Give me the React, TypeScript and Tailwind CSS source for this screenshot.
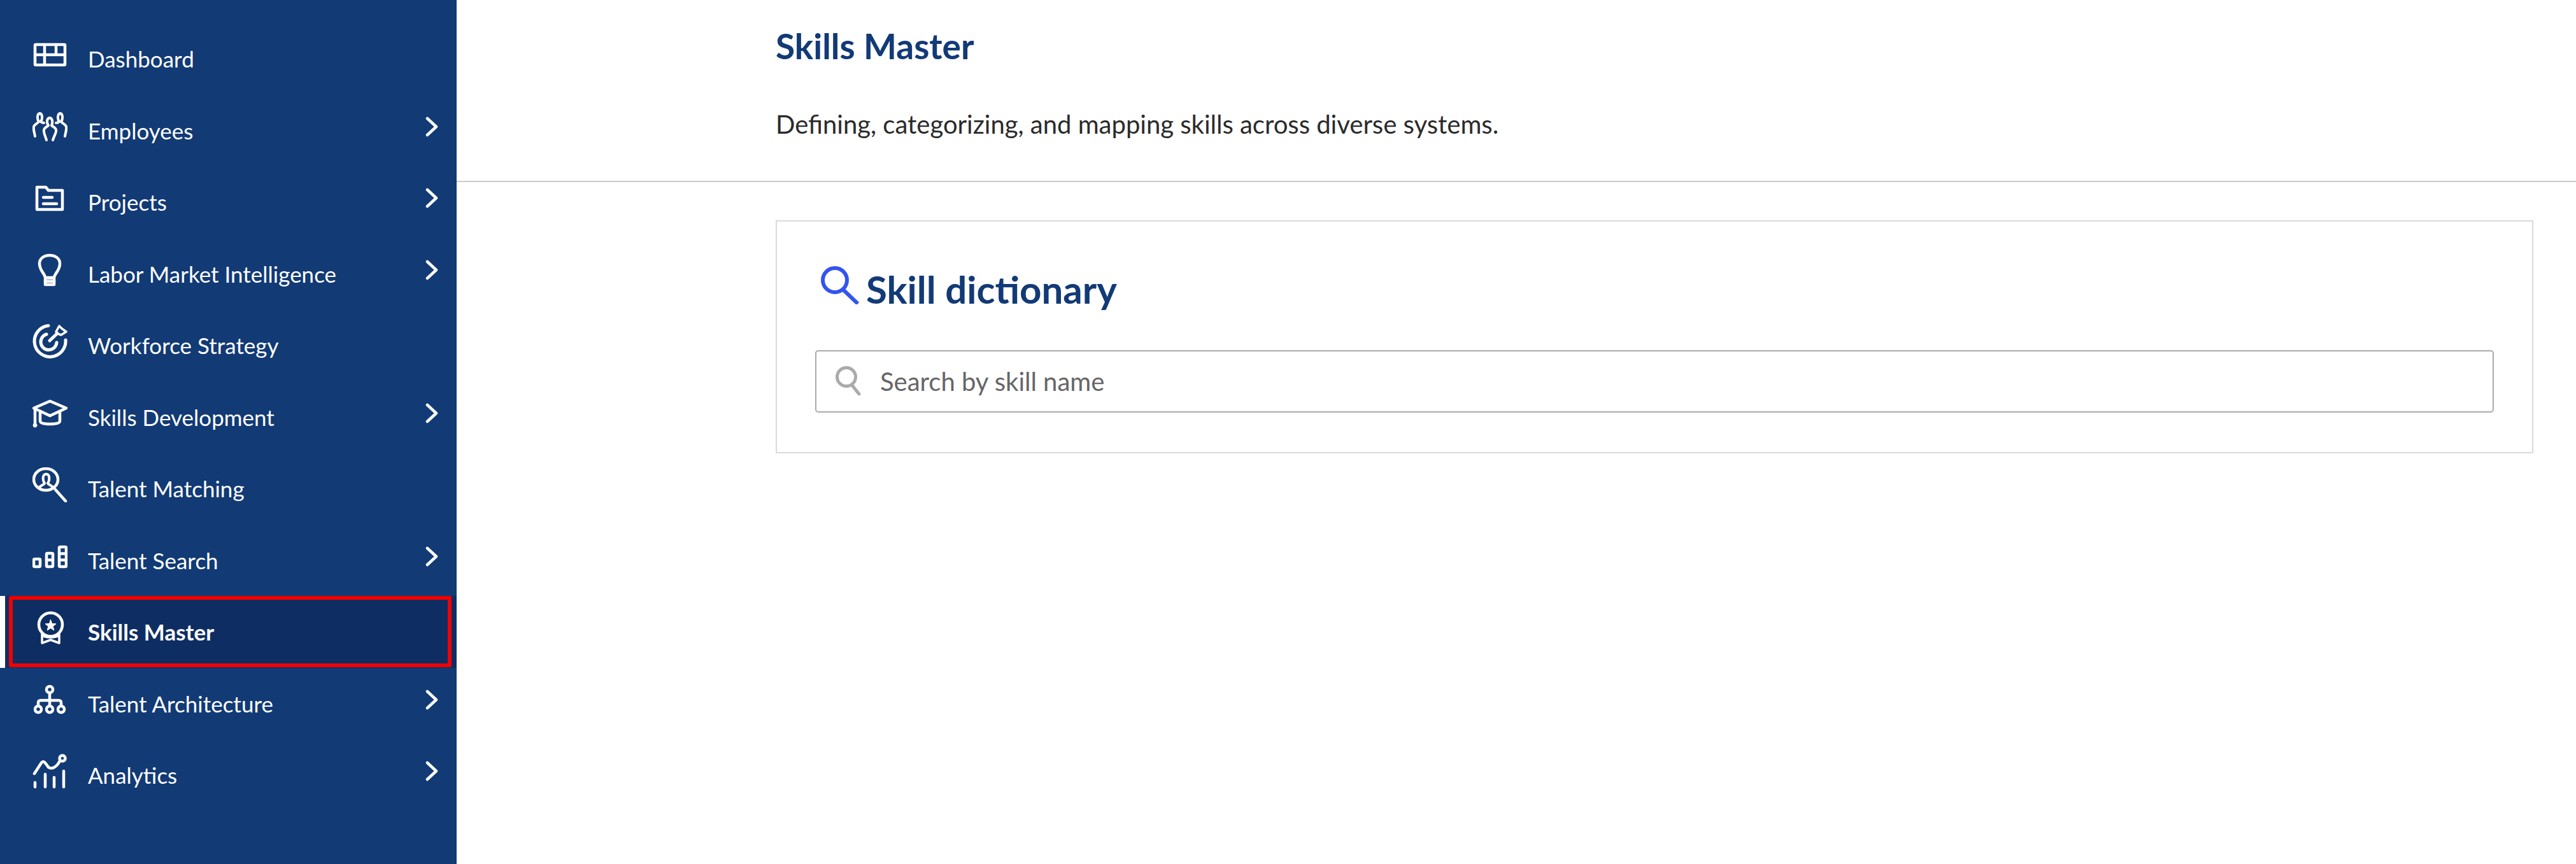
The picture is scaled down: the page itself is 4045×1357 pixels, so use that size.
const s = { fill: 'none', stroke: 'white', strokeWidth: 4.5, strokeLinecap: 'round', strokeLinejoin: 'round' } as const;

const IconBox = ({ children }: { children: React.ReactNode }) => (
  <svg viewBox="0 0 55 55" className="w-[55px] h-[55px] shrink-0 -mt-[12px]" {...s}>
    {children}
  </svg>
);

const icons: Record<string, React.ReactNode> = {
  dashboard: (
    <>
      <rect x="4" y="11" width="47" height="32" rx="1" />
      <path d="M4 27H51M19 11V43M37 11V27" />
    </>
  ),
  employees: (
    <g strokeWidth="4">
      <path d="M22 49C20 42 17 37 18 33C19 29 23 28 25 26C22 22 22 15 27 14C32 15 32 22 30 26C32 28 36 29 37 33C38 37 34 42 32 49" />
      <path d="M4 43C3 37 1 32 2 28C3 24 8 23 10 20C7 16 7 8 11.5 7C16 8 16 16 13 20C14 21 16 22 18 22" />
      <path d="M51 43C52 37 54 32 53 28C52 24 47 23 45 20C48 16 48 8 43.5 7C39 8 39 16 42 20C41 21 39 22 37 22" />
    </g>
  ),
  projects: (
    <>
      <path d="M7 10H21L25 15H47V45H7Z" />
      <path d="M17 26H31M17 36H38" />
    </>
  ),
  bulb: (
    <>
      <path d="M20 40C19 33 11 29 11 18C11 10 18 5 27 5C36 5 43 10 43 18C43 29 35 33 34 40Z" />
      <path d="M20 41H34V51H20Z" />
      <path d="M20 46H34" />
    </>
  ),
  target: (
    <>
      <path strokeWidth="5" d="M25 2.5A24.5 24.5 0 1 0 52 25" />
      <path strokeWidth="5" d="M22 16A12.5 12.5 0 1 0 38 29" />
      <path d="M27 26L39 14.5" strokeWidth="5" />
      <path d="M37 12L42 3L46 7L53 12L45 17L39 15Z" strokeWidth="3.5" />
    </>
  ),
  cap: (
    <>
      <path d="M27.5 9L53 20L27.5 32L2 20Z" />
      <path d="M12 27V40C12 44 20 45 27.5 45C35 45 43 44 43 40V27" />
      <path d="M4 21V45" />
      <circle cx="4" cy="47" r="3" fill="white" strokeWidth="1" />
    </>
  ),
  matching: (
    <>
      <ellipse cx="21" cy="19" rx="19" ry="17" />
      <path d="M36 35L52 53" />
      <path strokeWidth="4" d="M11 31C14 28 18 27 19 25C16 21 15 11 21.5 10.5C28 11 27 21 24 25C25 27 29 28 32 31" />
    </>
  ),
  search: (
    <>
      <rect x="2" y="32" width="10" height="12" rx="1.5" />
      <rect x="22" y="23" width="10" height="21" rx="1.5" />
      <path d="M22 33.5H32" />
      <rect x="42" y="13" width="11" height="31" rx="1.5" />
      <path d="M42 23.5H53M42 33.5H53" />
    </>
  ),
  badge: (
    <>
      <circle cx="28.5" cy="22" r="18.5" />
      <path d="M28.5 14.5L30.8 20.5L37 20.8L32.2 24.8L33.8 31L28.5 27.6L23.2 31L24.8 24.8L20 20.8L26.2 20.5Z" fill="white" strokeWidth="1" />
      <path strokeWidth="3.5" d="M15 37V51L28.5 46L42 51V37M15 39C20 43 37 43 42 39" />
    </>
  ),
  architecture: (
    <>
      <circle cx="27" cy="12" r="5" />
      <path d="M27 17V29M9 37V33C9 30 10 29 13 29H41C44 29 45 30 45 33V37M27 29V37" />
      <circle cx="9" cy="43" r="5" />
      <circle cx="27" cy="43" r="5" />
      <circle cx="45" cy="43" r="5" />
    </>
  ),
  analytics: (
    <>
      <path d="M3 31L14 14C18 9 21 16 25 21C30 25 38 21 43 11" />
      <circle cx="47" cy="7" r="4.5" />
      <path d="M4 45V52M20 32V52M34 37V52M49 27V52" />
    </>
  ),
};

const navItems = [
  { label: 'Dashboard', icon: 'dashboard' },
  { label: 'Employees', icon: 'employees', more: true },
  { label: 'Projects', icon: 'projects', more: true },
  { label: 'Labor Market Intelligence', icon: 'bulb', more: true },
  { label: 'Workforce Strategy', icon: 'target' },
  { label: 'Skills Development', icon: 'cap', more: true },
  { label: 'Talent Matching', icon: 'matching' },
  { label: 'Talent Search', icon: 'search', more: true },
  { label: 'Skills Master', icon: 'badge', active: true },
  { label: 'Talent Architecture', icon: 'architecture', more: true },
  { label: 'Analytics', icon: 'analytics', more: true },
];

const Sidebar = () => (
  <aside className="w-[717px] shrink-0 bg-[#123a75] pt-[36px]">
    {navItems.map((item) => (
      <div
        key={item.label}
        className={
          item.active
            ? 'relative flex items-center h-[112.5px] border-l-8 border-white bg-[#0e2e63] pl-[43px] pr-[29px] text-white font-bold'
            : 'flex items-center h-[112.5px] pl-[51px] pr-[29px] text-white'
        }
      >
        <IconBox>{icons[item.icon]}</IconBox>
        <span className="ml-[32px] flex-1 mt-[1px] text-[35px] leading-none">{item.label}</span>
        {item.more && (
          <svg viewBox="0 0 20 32" className="w-[20px] h-[32px] -mt-[12px]" {...s}>
            <path d="M3 3L17 16L3 29" />
          </svg>
        )}
        {item.active && <div className="absolute left-[6px] right-[8px] top-0 bottom-[1px] border-[6px] border-[#f00000] rounded-[3px]" />}
      </div>
    ))}
  </aside>
);

export default function App() {
  return (
    <div className="flex w-[4045px] h-[1357px] overflow-hidden bg-white font-['Lato',sans-serif]">
      <Sidebar />
      <main className="flex-1">
        <header className="h-[286px] border-b-[2px] border-[#c9c9d1] pl-[501px]">
          <h1 className="pt-[47px] text-[55px] leading-[50px] font-bold text-[#123a76]">Skills Master</h1>
          <p className="mt-[73px] text-[40px] leading-[50px] text-[#2b2b2b]">Defining, categorizing, and mapping skills across diverse systems.</p>
        </header>
        <section className="ml-[501px] mr-[67px] mt-[60px] h-[366px] border-[2.5px] border-[#dadada] pl-[60px] pr-[60px]">
          <div className="flex items-center h-[202px] pl-[9px]">
            <svg viewBox="0 0 60 60" className="w-[60px] h-[60px] -mt-[2px]" fill="none" stroke="#3354ee" strokeWidth="6">
              <circle cx="22" cy="22" r="19" />
              <path d="M35 37L58 59" />
            </svg>
            <h2 className="ml-[11px] mt-[10px] text-[60px] leading-none font-bold text-[#123a76]">Skill dictionary</h2>
          </div>
          <div className="flex items-center h-[98px] border-2 border-[#aaaaaa] rounded-[5px] pl-[29px]">
            <svg viewBox="0 0 42 46" className="w-[42px] h-[46px] shrink-0 -mt-[2px]" fill="none" stroke="#aaaaaa" strokeWidth="5" strokeLinecap="round">
              <circle cx="18" cy="17" r="14.5" />
              <path d="M27 30L38 44" />
            </svg>
            <input
              placeholder="Search by skill name"
              className="ml-[29px] flex-1 bg-transparent outline-none text-[40px] text-[#666666] placeholder:text-[#666666]"
            />
          </div>
        </section>
      </main>
    </div>
  );
}
